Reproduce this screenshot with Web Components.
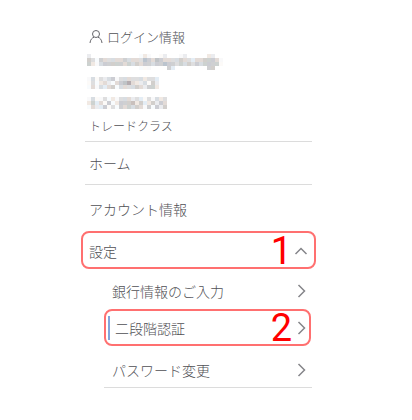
<!DOCTYPE html>
<html lang="ja">
<head>
<meta charset="utf-8">
<meta name="viewport" content="width=device-width, initial-scale=1">
<title>設定メニュー</title>
<style>
  body {
    margin: 0;
    background: #fff;
    color: #505055;
    font-family: "Noto Sans CJK JP", sans-serif;
    font-weight: 300;
  }
</style>
</head>
<body>
<side-menu>
  <account-summary slot="account">
    <span slot="heading">ログイン情報</span>
    <masked-value slot="mail" label="メールアドレス" rows="e............fef..fe...fe.....ee..|cdfcdddddcddddbcdbcddddcddeddcccdf|cefdcccccdcdcdccdccbccdcdcdcdccccf|.............fff....ce........cc.."></masked-value>
    <masked-value slot="code" label="口座番号" rows="fdfdedcfddddddedde|fdfedefdcbadeedfce|fdfdedcfddddcdecce"></masked-value>
    <masked-value slot="code" label="電話番号" rows="fdffdfefdddedefdfded|ecedfcfecccbeceececd|fdeecfdfcdcdcdfcfcec"></masked-value>
    <span slot="grade">トレードクラス</span>
  </account-summary>
  <menu-item ruled>ホーム</menu-item>
  <menu-item>アカウント情報</menu-item>
  <menu-item step="1" arrow="up">設定</menu-item>
  <menu-item slot="sub" arrow="right">銀行情報のご入力</menu-item>
  <menu-item slot="sub" step="2" arrow="right" current>二段階認証</menu-item>
  <menu-item slot="sub" arrow="right" ruled>パスワード変更</menu-item>
</side-menu>

<script>
class SideMenu extends HTMLElement {
  constructor() {
    super();
    const shadow = this.attachShadow({ mode: 'open' });
    shadow.innerHTML = `
      <style>
        :host {
          display: block;
          padding: 26px 100px 24px 85px;
        }
        nav {
          display: flex;
          flex-direction: column;
        }
        .sub {
          display: flex;
          flex-direction: column;
          margin-left: 19px;
        }
      </style>
      <slot name="account"></slot>
      <nav aria-label="メニュー">
        <slot></slot>
        <div class="sub"><slot name="sub"></slot></div>
      </nav>
    `;
  }
}

class AccountSummary extends HTMLElement {
  constructor() {
    super();
    const shadow = this.attachShadow({ mode: 'open' });
    shadow.innerHTML = `
      <style>
        :host {
          display: flex;
          flex-direction: column;
          gap: 7px;
          padding-bottom: 5px;
          border-bottom: 1px solid #dcdcdc;
          font-size: 12px;
          line-height: 20px;
        }
        .heading {
          display: flex;
          align-items: center;
          gap: 4px;
          padding-left: 4px;
          font-size: 13px;
          line-height: 21px;
        }
        .codes {
          display: flex;
          flex-direction: column;
          gap: 8px;
        }
        .grade {
          padding-left: 4px;
        }
      </style>
      <div class="heading">
        <svg width="14" height="14" viewBox="0 0 14 14" fill="none" stroke="#66666b" aria-hidden="true">
          <circle cx="7" cy="4" r="3.5"/>
          <path d="M1 13C1.3 9.7 3 7.9 5 7.2M9 7.2C11 7.9 12.7 9.7 13 13"/>
        </svg>
        <slot name="heading"></slot>
      </div>
      <slot name="mail"></slot>
      <div class="codes"><slot name="code"></slot></div>
      <div class="grade"><slot name="grade"></slot></div>
    `;
  }
}

// Hides a private value behind a mosaic. Each letter is one 4px tile.
class MaskedValue extends HTMLElement {
  connectedCallback() {
    const shadow = this.shadowRoot || this.attachShadow({ mode: 'open' });
    const rows = this.getAttribute('rows').split('|');
    const tones = {
      a: ['#a9b4c2', '#b4acb0'],
      b: ['#c0c4c7', '#c9c0bd', '#bbc4ce'],
      c: ['#cfd0d2', '#d2cfcc', '#cdd2d0', '#cccdd3'],
      d: ['#dededf', '#e3dbd7', '#d8dde2'],
      e: ['#ebecef', '#f1e9e3', '#e4edf5'],
      f: ['#f9f9fa', '#fcfaf8', '#f8fbfd']
    };
    const tiles = rows.map((row, y) => [...row].map((key, x) => {
      if (key === '.') return '';
      const shades = tones[key];
      const fill = shades[(x * 5 + (x >> 2) + y) % shades.length];
      return `<rect x="${x * 4}" y="${y * 4}" width="4" height="4" fill="${fill}"/>`;
    }).join('')).join('');
    shadow.innerHTML = `
      <style>
        :host {
          display: block;
          padding-left: 2px;
        }
        svg {
          display: block;
        }
      </style>
      <svg width="${rows[0].length * 4}" height="${rows.length * 4}" role="img" aria-label="${this.getAttribute('label')}" shape-rendering="crispEdges">${tiles}</svg>
    `;
  }
}

class MenuItem extends HTMLElement {
  connectedCallback() {
    const shadow = this.shadowRoot || this.attachShadow({ mode: 'open' });
    const step = this.getAttribute('step');
    const arrows = {
      up: '<path d="M1.5 10L7 4.5L12.5 10"/>',
      right: '<path d="M4.5 1L10.5 7L4.5 13"/>'
    };
    const arrow = arrows[this.getAttribute('arrow')];
    shadow.innerHTML = `
      <style>
        :host {
          display: block;
          font-size: 14px;
          line-height: 20px;
        }
        a {
          display: flex;
          align-items: center;
          box-sizing: border-box;
          height: 42px;
          padding: 0 4px;
          color: inherit;
          text-decoration: none;
        }
        .label {
          flex: 1;
        }
        svg {
          flex: none;
          fill: none;
          stroke: #85858a;
          stroke-width: 1.5;
        }
        .step {
          margin-right: 2px;
          color: #f00;
          font-family: Roboto, "Noto Sans", sans-serif;
          font-size: 38px;
          font-weight: 400;
          line-height: 34px;
        }
        :host([ruled]) {
          border-bottom: 1px solid #dcdcdc;
        }
        :host([step]) a {
          height: 38px;
          border: 2px solid #ff7070;
          border-radius: 8px;
        }
        :host([step="1"]) a {
          margin: 0 -4px;
          padding: 2px 6px 0;
        }
        :host([slot="sub"]) a {
          padding: 0 4px 0 8px;
        }
        :host([slot="sub"][step]) a {
          height: 37px;
          margin-right: 1px;
          padding: 0 1px 0 2px;
        }
        :host([current]) .label {
          padding-left: 5px;
          border-left: 2px solid #82a5dc;
          line-height: 24px;
        }
        :host(:not([step]):not([ruled])) a {
          height: 46px;
          padding-top: 2px;
        }
        :host([slot="sub"]:not([step]):not([ruled])) a {
          height: 40px;
          padding-top: 4px;
        }
        :host([slot="sub"][ruled]) a {
          height: 41px;
          padding-top: 6px;
        }
      </style>
      <a href="#">
        <span class="label"><slot></slot></span>
        ${step ? `<span class="step">${step}</span>` : ''}
        ${arrow ? `<svg width="14" height="14" viewBox="0 0 14 14" aria-hidden="true">${arrow}</svg>` : ''}
      </a>
    `;
  }
}

customElements.define('side-menu', SideMenu);
customElements.define('account-summary', AccountSummary);
customElements.define('masked-value', MaskedValue);
customElements.define('menu-item', MenuItem);
</script>
</body>
</html>
